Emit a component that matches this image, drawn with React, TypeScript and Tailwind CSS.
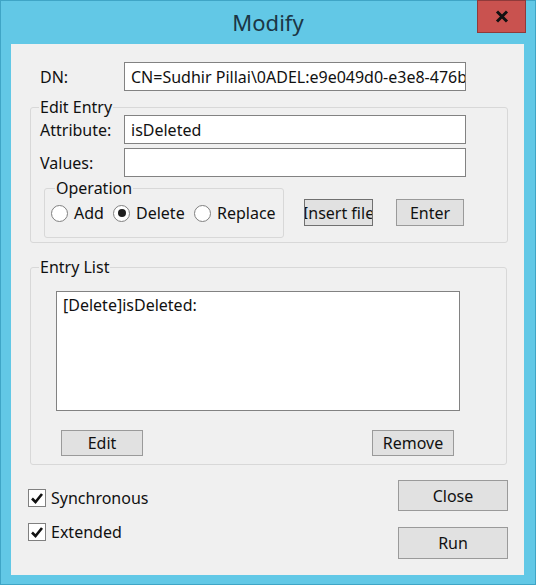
import type { ReactNode } from 'react';

const Button = ({ children, className = '' }: { children: ReactNode; className?: string }) => (
  <div
    className={`flex items-center justify-center overflow-hidden whitespace-nowrap bg-[#e1e1e1] border border-[#9a9a9a] ${className}`}
  >
    {children}
  </div>
);

const Radio = ({ label, checked = false, className = '' }: { label: string; checked?: boolean; className?: string }) => (
  <div className={`flex items-center gap-[6px] ${className}`}>
    <span className="flex h-[17px] w-[17px] items-center justify-center rounded-full border border-[#808080] bg-white">
      {checked && <span className="h-[8px] w-[8px] rounded-full bg-[#1e1e1e]" />}
    </span>
    <span>{label}</span>
  </div>
);

const Check = ({ label }: { label: string }) => (
  <div className="flex items-center gap-[5px] h-[18px]">
    <span className="flex h-[18px] w-[18px] items-center justify-center border border-[#808080] bg-white">
      <svg width="14" height="14" viewBox="0 0 14 14">
        <path d="M2 7.5 L5.5 11 L12 3" fill="none" stroke="#111" strokeWidth="2.6" />
      </svg>
    </span>
    <span>{label}</span>
  </div>
);

const Field = ({ children, className = '' }: { children?: ReactNode; className?: string }) => (
  <div className={`flex h-[29px] items-center overflow-hidden whitespace-nowrap border border-[#828282] bg-white pl-[6px] ${className}`}>
    {children}
  </div>
);

export default function App() {
  return (
    <div className="relative flex h-[585px] w-[536px] flex-col border border-[#3fa5c6] bg-[#62c8e6] font-['Noto_Sans',sans-serif] text-[16px] text-[#111]">
      {/* title bar */}
      <div className="flex h-[43px] items-center justify-center">
        <span className="text-[22px] text-[#1b3645]">Modify</span>
      </div>
      <div className="absolute right-[9px] top-[-1px] flex h-[33px] w-[49px] items-center justify-center border border-[#8f3a3a] bg-[#c9524f]">
        <svg width="14" height="13" viewBox="0 0 14 13">
          <path d="M2 1.5 L12 11.5 M12 1.5 L2 11.5" stroke="#111" strokeWidth="3" />
        </svg>
      </div>

      {/* client area */}
      <div className="ml-[10px] mr-[11px] flex h-[531px] flex-col bg-[#f0f0f0]">
        <div className="mt-[18px] flex items-center pl-[29px]">
          <span className="w-[84px]">DN:</span>
          <Field className="w-[342px]">CN=Sudhir Pillai\0ADEL:e9e049d0-e3e8-476b</Field>
        </div>

        <fieldset className="ml-[19px] mt-[8px] w-[478px] rounded-[3px] border border-[#d8d8d8] pb-[4px]">
          <legend className="ml-[8px] px-[1px] leading-[16px]">Edit Entry</legend>
          <div className="flex items-center pl-[9px]">
            <span className="w-[84px]">Attribute:</span>
            <Field className="w-[342px]">isDeleted</Field>
          </div>
          <div className="mt-[4px] flex items-center pl-[9px]">
            <span className="w-[84px]">Values:</span>
            <Field className="w-[342px]" />
          </div>
          <div className="mt-[3px] flex items-start">
            <fieldset className="ml-[13px] w-[240px] rounded-[3px] border border-[#d8d8d8] pb-[7px]">
              <legend className="ml-[10px] px-[1px] leading-[16px]">Operation</legend>
              <div className="flex h-[34px] items-center pl-[6px]">
                <Radio label="Add" className="w-[62px]" />
                <Radio label="Delete" checked className="w-[81px]" />
                <Radio label="Replace" />
              </div>
            </fieldset>
            <Button className="ml-[20px] mt-[19px] h-[27px] w-[69px] border-[#707070]">Insert file</Button>
            <Button className="ml-[23px] mt-[19px] h-[27px] w-[68px] border-[#8a8a8a]">Enter</Button>
          </div>
        </fieldset>

        <fieldset className="ml-[19px] mt-[16px] w-[477px] rounded-[3px] border border-[#d8d8d8] pb-[8px]">
          <legend className="ml-[8px] px-[1px] leading-[16px]">Entry List</legend>
          <div className="ml-[25px] mt-[16px] h-[120px] w-[404px] border border-[#828282] bg-white pl-[6px] pt-[3px] leading-[20px]">
            [Delete]isDeleted:
          </div>
          <div className="mt-[19px] flex">
            <Button className="ml-[30px] h-[26px] w-[82px]">Edit</Button>
            <Button className="ml-[229px] h-[26px] w-[82px]">Remove</Button>
          </div>
        </fieldset>

        <div className="mt-[15px] flex justify-between pl-[17px] pr-[16px]">
          <div className="flex flex-col gap-[16px] pt-[9px]">
            <Check label="Synchronous" />
            <Check label="Extended" />
          </div>
          <div className="flex flex-col gap-[16px]">
            <Button className="h-[31px] w-[110px]">Close</Button>
            <Button className="h-[32px] w-[110px] border-[#3c7fb1]">Run</Button>
          </div>
        </div>
      </div>
    </div>
  );
}
